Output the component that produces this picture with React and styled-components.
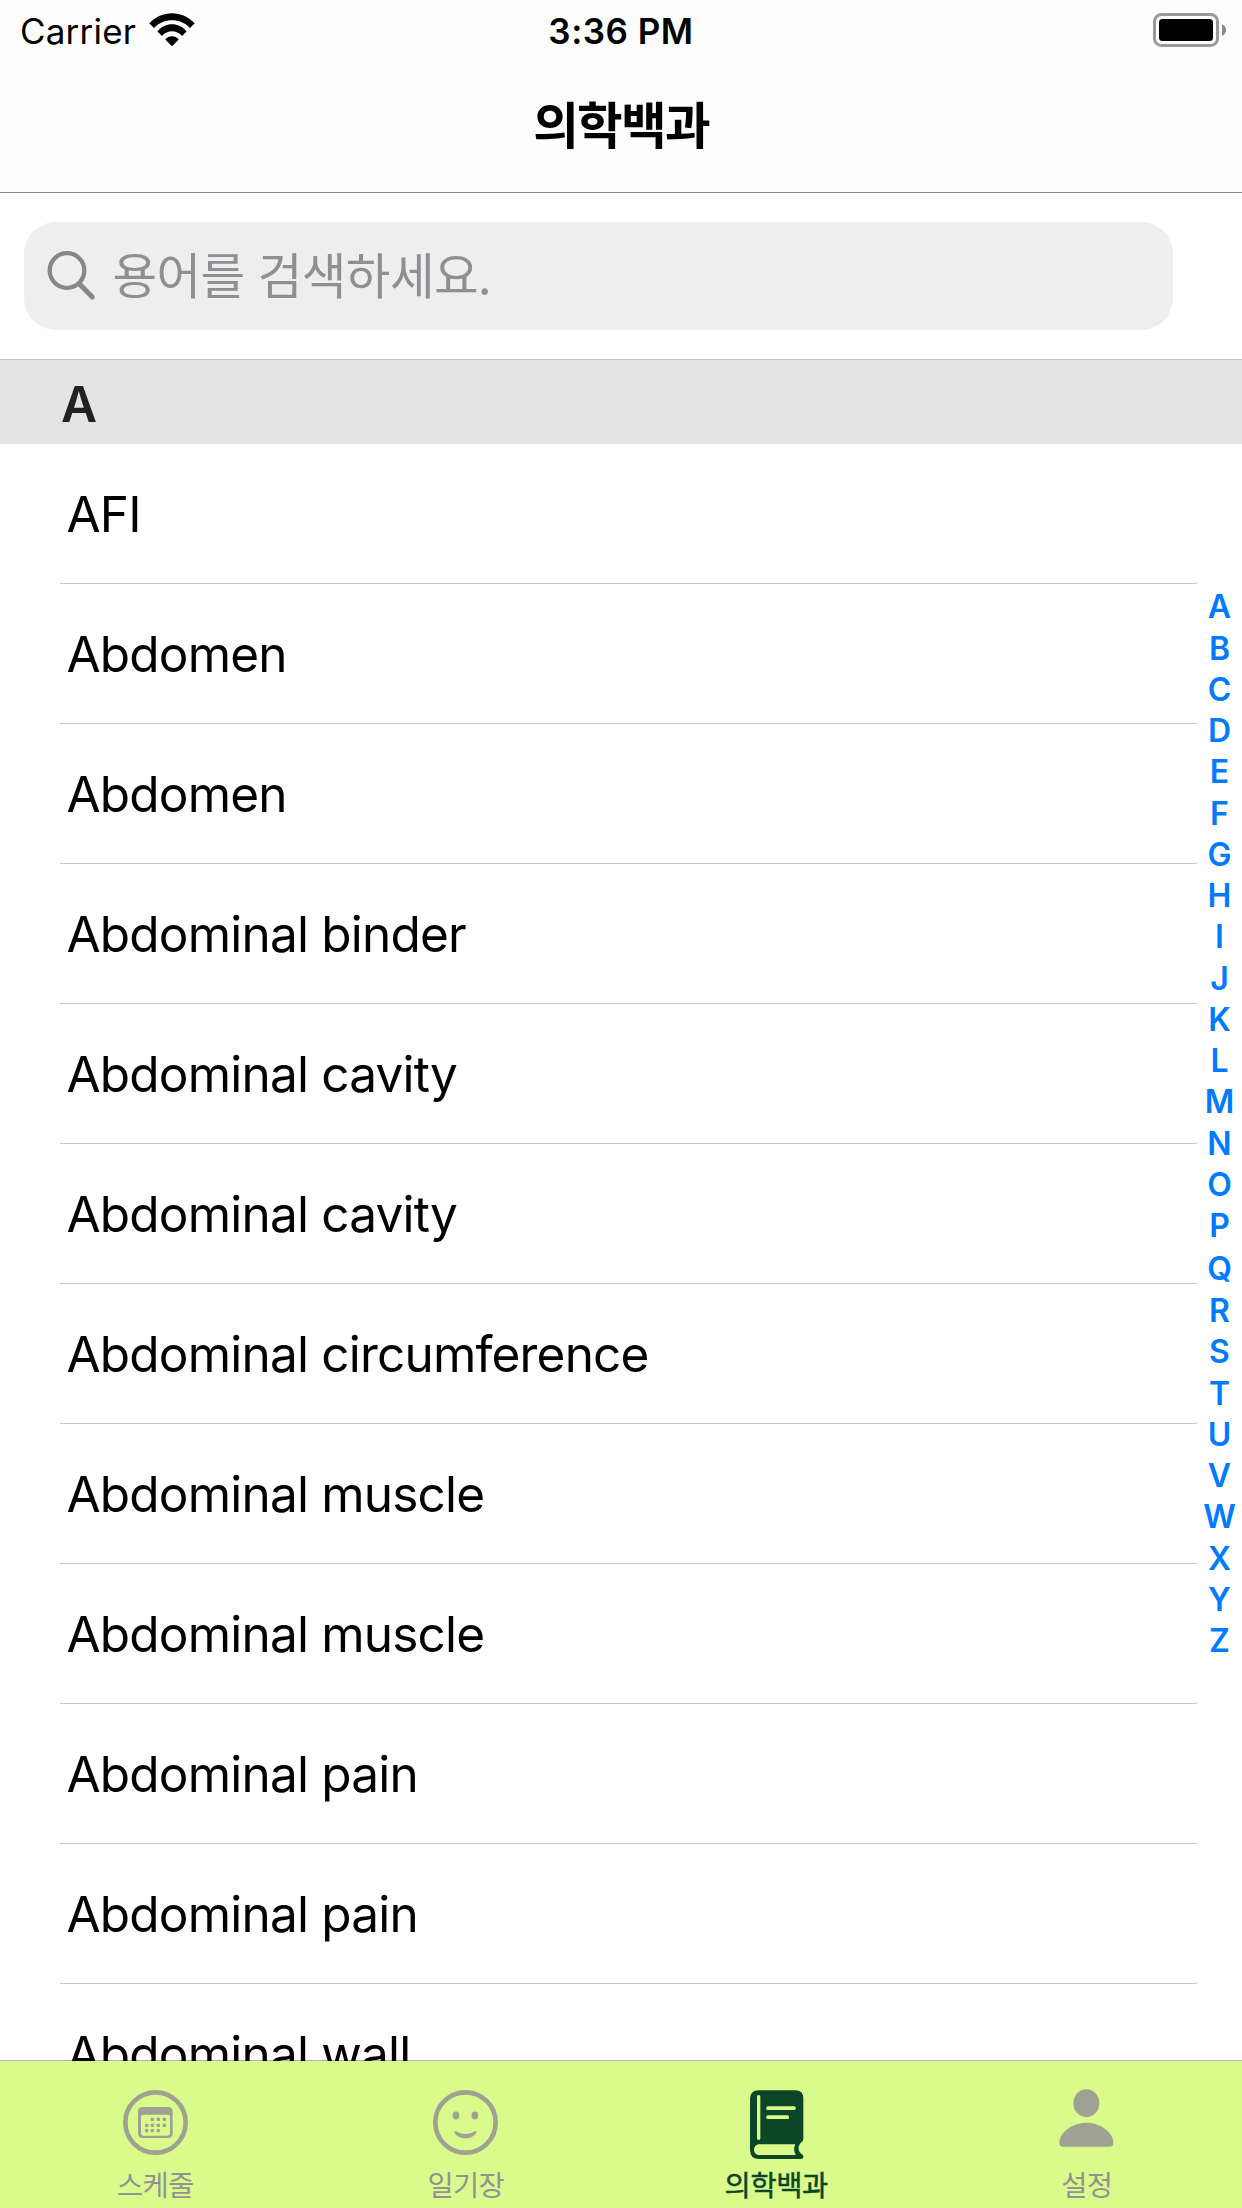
import React from "react";
import styled, { createGlobalStyle } from "styled-components";

const GlobalStyle = createGlobalStyle`
  *, *::before, *::after { box-sizing: border-box; }
  html, body { margin: 0; padding: 0; background: #fff; }
  body { font-family: Inter, "Noto Sans CJK KR", sans-serif; color: #000; }
`;

const KR = `"Noto Sans CJK KR", Inter, sans-serif`;

const Screen = styled.div`
  display: flex;
  flex-direction: column;
  width: 1242px;
  height: 2208px;
  overflow: hidden;
  background: #fff;
`;

const Header = styled.header`
  flex: none;
  height: 193px;
  background: #fdfdfd;
  border-bottom: 1px solid #8b8b8b;
`;

const StatusBar = styled.div`
  display: grid;
  grid-template-columns: 1fr auto 1fr;
  align-items: center;
  height: 62px;
  padding: 0 20px;
  font-size: 35px;
  line-height: 62px;
`;

const Carrier = styled.div`
  display: flex;
  align-items: center;
  gap: 13px;
  letter-spacing: 0.2px;
  svg { margin-top: -3px; }
`;

const Time = styled.div`
  font-weight: 600;
  letter-spacing: 0.5px;
`;

const BatteryWrap = styled.div`
  display: flex;
  justify-content: flex-end;
  margin-right: -4px;
  svg { margin-top: -2px; }
`;

const Title = styled.h1`
  margin: 0;
  height: 120px;
  font-family: ${KR};
  font-size: 49.6px;
  line-height: 120px;
  font-weight: 700;
  letter-spacing: -1.7px;
  text-align: center;
`;

const SearchArea = styled.div`
  flex: none;
  height: 166px;
  padding: 29px 69px 0 24px;
`;

const SearchField = styled.div`
  display: flex;
  align-items: center;
  gap: 15.5px;
  height: 108px;
  padding-left: 23px;
  border-radius: 32px;
  background: #eee;
`;

const Placeholder = styled.span`
  font-family: ${KR};
  font-size: 48.5px;
  line-height: 103px;
  height: 108px;
  letter-spacing: -0.6px;
  word-spacing: 3px;
  color: #8e8e93;
`;

const SectionHeader = styled.h2`
  flex: none;
  margin: 0;
  height: 85px;
  padding: 2px 0 0 61px;
  border-top: 1px solid #c4c4c6;
  background: #e4e4e4;
  color: #222;
  font-size: 49.5px;
  line-height: 84px;
  font-weight: 600;
`;

const Content = styled.main`
  flex: 1;
  min-height: 0;
  display: flex;
  justify-content: space-between;
  overflow: hidden;
`;

const List = styled.ul`
  list-style: none;
  margin: 0;
  padding: 0 0 0 60px;
  width: 1197px;
`;

const Row = styled.li`
  height: 140px;
  padding-left: 6.5px;
  border-bottom: 1px solid #c6c6c8;
  font-size: 49.5px;
  line-height: 140px;
  letter-spacing: -0.8px;
  white-space: nowrap;
`;

const IndexBar = styled.nav`
  display: flex;
  flex-direction: column;
  align-items: center;
  width: 45px;
  padding-top: 142.3px;
  color: #007aff;
  font-size: 32px;
  font-weight: 600;
`;

const IndexLetter = styled.span`
  flex: none;
  height: ${(p) => (p.$tall ? "43.5px" : "41.27px")};
  line-height: ${(p) => (p.$tall ? "44.5px" : "41.27px")};
`;

const TabBar = styled.nav`
  flex: none;
  display: grid;
  grid-template-columns: repeat(4, 1fr);
  height: 148px;
  margin-top: -1px;
  border-top: 1px solid rgba(0, 0, 0, 0.3);
  background: #dafb8c;
  background-clip: padding-box;
  position: relative;
`;

const Tab = styled.div`
  display: flex;
  flex-direction: column;
  align-items: center;
  padding-top: 28px;
  color: ${(p) => (p.$active ? "#0b4629" : "#929292")};
`;

const IconSlot = styled.div`
  height: 74px;
  padding-top: ${(p) => p.$top || 0}px;
  padding-left: ${(p) => (p.$active ? 1 : 0)}px;
  color: ${(p) => (p.$active ? "#0b4629" : "#9fa292")};
  svg { display: block; }
`;

const TabLabel = styled.span`
  font-family: ${KR};
  font-size: 28.5px;
  line-height: 41px;
  letter-spacing: ${(p) => (p.$active ? "-0.4px" : "-0.7px")};
  -webkit-text-stroke: ${(p) => (p.$active ? "0.5px currentColor" : "0")};
`;

const WifiIcon = () => (
  <svg width="46" height="34" viewBox="0 0 46 34">
    <path d="M0.3 10.2C12.5 -3.2 33.5 -3.2 45.7 10.2L41 14.9C31.5 4.6 14.5 4.6 5 14.9Z" />
    <path d="M8.5 18.4C16 9 30 9 37.5 18.4L33 23C27.5 16.8 18.5 16.8 13 23Z" />
    <path d="M16.3 26.5C19.5 22.2 26.500 22.2 29.700 26.500L23 33.200Z" />
  </svg>
);

const BatteryIcon = () => (
  <svg width="73" height="34" viewBox="0 0 73 34">
    <rect x="1.5" y="1.5" width="63" height="31" rx="7" fill="none" stroke="#999" strokeWidth="3" />
    <rect x="6" y="6" width="54" height="22" rx="3.500" />
    <path d="M69 11C74.300 13.500 74.300 20.500 69 23Z" fill="#8a8a8a" />
  </svg>
);

const SearchIcon = () => (
  <svg width="50" height="52" viewBox="0 0 50 52" fill="none" stroke="#87878b">
    <circle cx="20" cy="20.500" r="17.300" strokeWidth="4.300" />
    <path d="M32.500 34L45.300 47" strokeWidth="5" strokeLinecap="round" />
  </svg>
);

const dots = [
  [217, 238], [235, 238], [253, 238],
  [200, 256], [217, 256], [235, 256], [253, 256],
  [200, 272], [217, 272], [235, 272],
];

const CalendarIcon = () => (
  <svg width="65" height="65" viewBox="129 150 195 195">
    <circle cx="226.500" cy="247.500" r="90.500" fill="none" stroke="currentColor" strokeWidth="14" />
    <path
      fill="currentColor"
      fillRule="evenodd"
      d="M188 201H264Q278 201 278 215V280Q278 294 264 294H188Q174 294 174 280V215Q174 201 188 201ZM190 224Q183 224 183 231V279Q183 287 191 287H262Q270 287 270 279V231Q270 224 263 224Z"
    />
    {dots.map(([x, y]) => (
      <rect key={`${x}-${y}`} x={x - 5} y={y - 5} width="10" height="10" rx="2" fill="currentColor" />
    ))}
  </svg>
);

const SmileIcon = () => (
  <svg width="65" height="65" viewBox="1059 150 195 195">
    <circle cx="1156.500" cy="247.500" r="90.500" fill="none" stroke="currentColor" strokeWidth="14" />
    <ellipse cx="1128" cy="226.500" rx="10" ry="12" fill="currentColor" />
    <ellipse cx="1184.500" cy="226.500" rx="10" ry="12" fill="currentColor" />
    <path fill="currentColor" d="M1123 275C1124 272 1128 273 1131 275C1147 284 1165 284 1182 275C1185 273 1189 272 1190 275C1190 282 1174 295 1156.500 295C1139 295 1123 282 1123 275Z" />
  </svg>
);

const BookIcon = () => (
  <svg width="54" height="69" viewBox="210 150 162 207">
    <path
      fill="currentColor"
      fillRule="evenodd"
      d="M236 151H346Q370 151 370 175V296Q370 303 364 307C353 317 353 332 364 341Q370 345 370 349Q371 357 363 357H238Q210 357 210 329V177Q210 151 236 151ZM238 313C217 313 217 345 238 345H348C341 335 341 323 346 313Z"
    />
    <path d="M236 170V295" stroke="#dafb8c" strokeWidth="10" strokeLinecap="round" />
    <path d="M264 204.500H342M264 231.500H322" stroke="#dafb8c" strokeWidth="11" strokeLinecap="round" />
  </svg>
);

const PersonIcon = () => (
  <svg width="55" height="58" viewBox="1136 148 165 174">
    <ellipse cx="1218" cy="190.500" rx="39" ry="42" fill="currentColor" />
    <path fill="currentColor" d="M1218 249C1262 249 1299 280 1299 309Q1299 321 1288 321H1148Q1137 321 1137 309C1137 280 1174 249 1218 249Z" />
  </svg>
);

const terms = [
  "AFI", "Abdomen", "Abdomen", "Abdominal binder", "Abdominal cavity", "Abdominal cavity",
  "Abdominal circumference", "Abdominal muscle", "Abdominal muscle", "Abdominal pain",
  "Abdominal pain", "Abdominal wall",
];

const tabs = [
  { label: "스케줄", Icon: CalendarIcon, top: 1 },
  { label: "일기장", Icon: SmileIcon, top: 1 },
  { label: "의학백과", Icon: BookIcon, top: 1, active: true },
  { label: "설정", Icon: PersonIcon, top: 0 },
];

export default function App() {
  return (
    <Screen>
      <GlobalStyle />
      <Header>
        <StatusBar>
          <Carrier>Carrier <WifiIcon /></Carrier>
          <Time>3:36 PM</Time>
          <BatteryWrap><BatteryIcon /></BatteryWrap>
        </StatusBar>
        <Title>의학백과</Title>
      </Header>
      <SearchArea>
        <SearchField>
          <SearchIcon />
          <Placeholder>용어를 검색하세요.</Placeholder>
        </SearchField>
      </SearchArea>
      <SectionHeader>A</SectionHeader>
      <Content>
        <List>
          {terms.map((t, i) => <Row key={i}>{t}</Row>)}
        </List>
        <IndexBar>
          {"ABCDEFGHIJKLMNOPQRSTUVWXYZ".split("").map((c) => (
            <IndexLetter key={c} $tall={c === "Q"}>{c}</IndexLetter>
          ))}
        </IndexBar>
      </Content>
      <TabBar>
        {tabs.map(({ label, Icon, top, active }) => (
          <Tab key={label} $active={active}>
            <IconSlot $top={top} $active={active}><Icon /></IconSlot>
            <TabLabel $active={active}>{label}</TabLabel>
          </Tab>
        ))}
      </TabBar>
    </Screen>
  );
}
